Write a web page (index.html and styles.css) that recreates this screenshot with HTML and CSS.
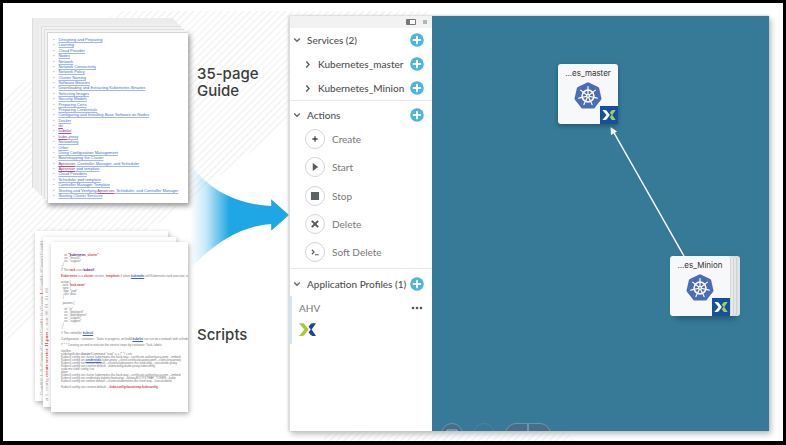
FILE: index.html
```html
<!DOCTYPE html>
<html lang="en">
<head>
<meta charset="utf-8">
<title>Guide and scripts to blueprint</title>
<link rel="stylesheet" href="styles.css">
</head>
<body>
<svg class="defs" aria-hidden="true">
  <symbol id="plus" viewBox="0 0 14 14"><circle cx="7" cy="7" r="6.800" fill="#4bb5e2"/><path d="M7 3.600v6.800M3.600 7h6.800" stroke="#fff" stroke-width="1.900" stroke-linecap="round"/></symbol>
  <symbol id="down" viewBox="0 0 8 8"><path d="M1.200 2.500 4 5.300l2.800-2.800" fill="none" stroke="#666" stroke-width="1.300"/></symbol>
  <symbol id="right" viewBox="0 0 8 8"><path d="M2.300 1.500 5 4.500 2.300 7.500" fill="none" stroke="#555" stroke-width="1.300"/></symbol>
  <symbol id="kube" viewBox="-15 -15 30 30">
    <path d="M0-12 9.400-7.500 11.700 2.700 5.200 10.800H-5.200L-11.700 2.700-9.400-7.500z" fill="#4a6db5" stroke="#4a6db5" stroke-width="3.500" stroke-linejoin="round"/>
    <circle r="5.900" fill="none" stroke="#fff" stroke-width="1.600"/>
    <path d="M0 0V-9.500M0 0 7.400-5.900M0 0 9.300 2.100M0 0 4.100 8.600M0 0-4.100 8.600M0 0-9.300 2.100M0 0-7.400-5.900" stroke="#fff" stroke-width="1.200" stroke-linecap="round"/>
    <circle r="1.900" fill="#fff"/><circle r=".8" fill="#4a6db5"/>
  </symbol>
  <symbol id="xleft" viewBox="0 0 16 12"><path d="M0 0h3.200Q4.600 0 5.500 1.200L9 6 5.500 10.800Q4.600 12 3.200 12H0L5 6z"/></symbol>
  <symbol id="xright" viewBox="0 0 16 12"><path d="M16 0h-3.200Q11.600 0 10.800 1L9 3.300 11.200 6 9 8.700 10.800 11Q11.600 12 12.800 12H16L11.900 6z"/></symbol>
</svg>

<main class="frame">
  <section class="sources">
    <div class="source">
      <div class="sheet guide">
        <ul>
          <li><a href="#">Designing and Preparing</a></li><li><a href="#">Learning</a></li><li><a href="#">Cloud Provider</a></li><li><a href="#">Nodes</a></li><li><a href="#">Network</a></li><li><a href="#">Network Connectivity</a></li><li><a href="#">Network Policy</a></li><li><a href="#">Cluster Naming</a></li><li><a href="#">Software Binaries</a></li><li><a href="#">Downloading and Extracting Kubernetes Binaries</a></li><li><a href="#">Selecting Images</a></li><li><a href="#">Security Models</a></li><li><a href="#">Preparing Certs</a></li><li><a href="#">Preparing Credentials</a></li><li><a href="#">Configuring and Installing Base Software on Nodes</a></li><li><a href="#">Docker</a></li><li><a href="#"><i>rkt</i></a></li><li><a href="#"><i>kubelet</i></a></li><li><a href="#"><i>kube</i>-proxy</a></li><li><a href="#">Networking</a></li><li><a href="#">Other</a></li><li><a href="#">Using Configuration Management</a></li><li><a href="#">Bootstrapping the Cluster</a></li><li><a href="#"><i>Apiserver</i>, Controller Manager, and Scheduler</a></li><li><a href="#"><i>Apiserver</i> pod template</a></li><li><a href="#">Cloud Providers</a></li><li><a href="#">Scheduler pod template</a></li><li><a href="#">Controller Manager Template</a></li><li><a href="#">Starting and Verifying <i>Apiserver</i>, Scheduler, and Controller Manager</a></li><li><a href="#">Starting Cluster Services</a></li>
        </ul>
      </div>
      <h2 class="label">35-page<br>Guide</h2>
    </div>
    <div class="source">
      <div class="stack">
        <div class="sheet back far"><p>Cont001 1. 0. (Create (Create) Cont01. 0. (Create <b>1.</b> Cont01. (Create) Cont01</p></div>
        <div class="sheet back near"><p>at 1. config <b>create service 11.pass</b> a. state 00. 01. 01. 00</p></div>
        <div class="sheet script"><pre>    id: <b class="m">"kubernetes_</b><b>cluster"</b>
    os: "linux01"
    os: "support"
  )
 }
// The <b>task</b> uses <b class="m">kubectl</b>

<b>Kubernetes</b> is a <b>cluster</b> service, <b>templates</b> if token <u>kubeadm</u> self.Kubernetes.task.executor, on jobs. It "deploy

action {
  task "<b>task.name</b>"
  type: (
   app: "pod"
   cpu: data
  )

  params {

    id: "in"
    os: "deployed"
    os: "deployment"
    os: "support"
    os: "support"
  )
 }

// The controller <u>kubectl</u>

Configuration : container : Tasks in progress, on build <u>kubelet</u> can run on a network with scheduler, on

/* * * Creating an end to execute the service steps by container: Task, labels

/opt/bin
sudo/opt/kube <strong>cluster</strong>/Command "start" = = /* */ = etc
Kubectl config set cluster kubernetes-the-hard-way --certificate-authority=ca.pem --embed
Kubectl config set <u>credentials</u> kube-proxy --client-certificate=proxy.pem --client-key=proxy
Kubectl config set context default --cluster=kubernetes-the-hard-way --user=kube-proxy
Kubectl config use context default --kubeconfig=kube-proxy.kubeconfig
sudo mv kube config /var
done
Kubectl config set cluster kubernetes-the-hard-way --certificate-authority=ca.pem --embed
Kubectl config set credentials kubelet bootstrap --token=BOOTSTRAP_TOKEN --kube
Kubectl config set context default --cluster=kubernetes-the-hard-way --user=kubelet

Kubectl config use context default -- <b>kubeconfig=bootstrap.kubeconfig</b></pre></div>
      </div>
      <h2 class="label low">Scripts</h2>
    </div>
    <svg class="arrow" viewBox="0 0 100 106" aria-hidden="true">
      <defs><linearGradient id="fade" x1="0" x2="1" y1="0" y2="0"><stop offset="0" stop-color="#1fa6e4" stop-opacity="0"/><stop offset=".16" stop-color="#1fa6e4" stop-opacity=".25"/><stop offset=".4" stop-color="#1fa6e4"/></linearGradient></defs>
      <path d="M0 0Q28 40 82 43V36L100 52 82 68V61Q40 64 0 106z" fill="url(#fade)"/>
    </svg>
  </section>

  <section class="app">
    <aside class="panel">
      <div class="bar">
        <svg width="10" height="6" aria-hidden="true"><path d="M.5.5h9v5h-9z" fill="#fff" stroke="#777"/><path d="M1 1h3v4H1z" fill="#777"/></svg>
        <svg width="6" height="6" aria-hidden="true"><path d="M1 1h4v4H1z" fill="#b5b5b5"/></svg>
      </div>
      <div class="group">
        <div class="row"><svg class="chev"><use href="#down"/></svg><h3>Services (2)</h3><button class="add" aria-label="Add service"><svg><use href="#plus"/></svg></button></div>
        <div class="row child"><svg class="chev"><use href="#right"/></svg><span>Kubernetes_master</span><button class="add" aria-label="Add to master"><svg><use href="#plus"/></svg></button></div>
        <div class="row child"><svg class="chev"><use href="#right"/></svg><span>Kubernetes_Minion</span><button class="add" aria-label="Add to minion"><svg><use href="#plus"/></svg></button></div>
      </div>
      <div class="group actions">
        <div class="row"><svg class="chev"><use href="#down"/></svg><h3>Actions</h3><button class="add" aria-label="Add action"><svg><use href="#plus"/></svg></button></div>
        <div class="list">
          <button><svg viewBox="0 0 20 20"><path d="M10 7v6M7 10h6" stroke="#555" stroke-width="1.500"/><circle cx="10" cy="10" r="1.500" fill="#555"/></svg>Create</button>
          <button><svg viewBox="0 0 20 20"><path d="M7.500 5.500v9l6-4.500z" fill="#555b5e"/></svg>Start</button>
          <button><svg viewBox="0 0 20 20"><path d="M5.500 5.500h9v9h-9z" fill="#5d6365"/></svg>Stop</button>
          <button><svg viewBox="0 0 20 20"><path d="m6.500 6.500 7 7m0-7-7 7" stroke="#555" stroke-width="2.200"/></svg>Delete</button>
          <button><svg viewBox="0 0 20 20"><path d="M6.500 7.500 9 10l-2.500 2.500M10 13h4" fill="none" stroke="#555" stroke-width="1.200"/></svg>Soft Delete</button>
        </div>
      </div>
      <div class="group last">
        <div class="row"><svg class="chev"><use href="#down"/></svg><h3>Application Profiles (1)</h3><button class="add" aria-label="Add profile"><svg><use href="#plus"/></svg></button></div>
        <div class="profile">
          <div class="name"><span>AHV</span><button aria-label="More"><svg width="12" height="4"><circle cx="2" cy="2" r="1.300"/><circle cx="6" cy="2" r="1.300"/><circle cx="10" cy="2" r="1.300"/></svg></button></div>
          <svg width="17" height="13" aria-label="Nutanix"><use href="#xleft" fill="#a9c83c"/><use href="#xright" fill="#17479a"/></svg>
        </div>
      </div>
    </aside>
    <div class="canvas">
      <svg class="edge" aria-hidden="true"><path d="M252 240 181 115" stroke="#fff" stroke-width="1.500"/><path d="m178.500 111 .5 8 6-3.500z" fill="#fff"/></svg>
      <div class="node master"><span>...es_master</span><svg class="kube"><use href="#kube"/></svg><div class="badge"><svg width="14" height="10"><use href="#xleft" fill="#fff"/><use href="#xright" fill="#a9d05a"/></svg></div></div>
      <div class="node minion"><span>...es_Minion</span><svg class="kube"><use href="#kube"/></svg><div class="badge"><svg width="14" height="10"><use href="#xleft" fill="#fff"/><use href="#xright" fill="#a9d05a"/></svg></div></div>
      <div class="tools">
        <button aria-label="Fit"><svg width="20" height="9"><path d="M5 9V6h10v3" fill="none" stroke="#9cbccb"/></svg></button>
        <button class="clear" aria-label="Arrange"><svg width="20" height="9"><path d="m5 9 2-2 2 2m2-2 2 2 2-2" fill="none" stroke="#7fa9bd"/></svg></button>
        <div class="pill"><button aria-label="Zoom out"></button><button aria-label="Zoom in"></button></div>
      </div>
    </div>
  </section>
</main>
</body>
</html>
```
FILE: styles.css
```css
* { box-sizing: border-box; }
body { margin: 0; font-family: Lato, "Liberation Sans", sans-serif; color: #555; }
h2, h3, p, pre, ul { margin: 0; padding: 0; }
button { border: 0; padding: 0; background: none; font: inherit; color: inherit; display: flex; align-items: center; }
.defs { position: absolute; width: 0; height: 0; }

.frame {
  position: relative;
  min-height: 100vh;
  border: 3px solid #000;
  border-bottom-width: 4px;
  background: #fff;
  display: grid;
  grid-template-columns: 286fr 480fr;
  padding-right: 14px;
  overflow: hidden;
}
.frame::before, .frame::after {
  content: "";
  position: absolute;
  inset: 0;
  background: repeating-linear-gradient(135deg, #f4f4f4 0 1px, #fff 2px 5px);
}
.frame::before { clip-path: polygon(0 95px, 115px 8px, 430px 8px, 0 340px); }
.frame::after { clip-path: polygon(320px 100%, 340px 400px, 550px 400px, 570px 100%); }

.sources { position: relative; z-index: 1; padding: 30px 0 0 45px; display: flex; flex-direction: column; gap: 39px; }
.source { display: flex; align-items: flex-start; gap: 9px; }
.label { font: 500 15px/17px Inter, sans-serif; color: #3c3c3c; padding-top: 32px; }
.label.low { padding-top: 84px; }
.sheet { width: 140px; height: 170px; background: #fff; }
.guide {
  padding: 5px 0 5px 5px;
  box-shadow: -1px -1px #d5d5d5, -3px -3px #f4f4f4, -4px -4px #dcdcdc, -6px -6px #f2f2f2, -7px -7px #dedede, -8px -8px #efefef, -9px -9px #efefef, -10px -10px #ececec, -11px -11px #ececec, -12px -12px #ececec, -13px -13px #ececec, -14px -14px #ececec, -15px -15px #ececec, -16px -15px #ddd, 1px 2px 5px 1px #999;
}
.guide ul { height: 100%; list-style: none; display: flex; flex-direction: column; justify-content: space-between; }
.guide li { display: flex; gap: 4px; font: 700 4px/4px "Liberation Sans", sans-serif; white-space: nowrap; color: #89a5ea; }
.guide li::before { content: "•"; }
.guide a { color: #4470dc; font-weight: 400; text-decoration: underline; text-decoration-color: #a2b7f0; }
.guide i { font-style: normal; color: #75469d; text-decoration: underline; text-decoration-color: #cf4b72; }

.stack { display: grid; width: 140px; }
.stack .sheet { grid-area: 1 / 1; width: auto; box-shadow: 1px 2px 5px #aaa; }
.stack .back { position: relative; overflow: hidden; }
.stack .far { left: -13px; top: -11px; margin-right: 7px; }
.stack .near { left: -5px; top: -5px; margin-right: 7px; }
.back p { writing-mode: vertical-rl; transform: rotate(180deg); height: 160px; font: 5px/6px "Liberation Serif", serif; color: #999; white-space: nowrap; margin: 4px 0 0 4px; }
.back.near p { margin-left: 1px; }
.stack .script { margin-left: 3px; padding: 12px 0 0 10px; overflow: hidden; position: relative; }
.script pre { font: 3px/3px "Liberation Sans", sans-serif; color: #777; }
.stack b { color: #d0454f; }
.stack b.m { color: #5d2274; }
.stack u { color: #3f63d6; font-weight: 700; }

.arrow { position: absolute; left: 187px; top: 160px; width: 99px; height: 106px; }

.app {
  position: relative;
  z-index: 1;
  display: grid;
  grid-template-columns: 143px 1fr;
  margin: 13px 0 10px;
  min-height: 415px;
  box-shadow: 2px 3px 6px #bbb, 0 0 2px #bbb;
  background: #fff;
}
.panel { display: flex; flex-direction: column; font-size: 10px; line-height: 12px; border-left: 1px solid #ddd; }
.bar { height: 12px; background: #f2f2f2; display: flex; align-items: center; justify-content: flex-end; gap: 6px; padding-right: 4px; }
.group { border-bottom: 1px solid #e9e9e9; }
.last { border: 0; }
.row { height: 24px; display: flex; align-items: center; padding: 0 8px 0 3px; gap: 6px; }
.row h3, .row span { font-size: 10px; font-weight: 500; color: #505050; flex: 1; min-width: 0; white-space: nowrap; }
.row.child { padding-left: 14px; }
.chev { width: 8px; height: 8px; flex: none; }
.add svg { width: 14px; height: 14px; }
.actions { padding: 2px 0 6px; height: 168px; display: flex; flex-direction: column; }
.list { flex: 1; padding: 2px 0 0 15px; display: flex; flex-direction: column; justify-content: space-between; color: #777; }
.list button { gap: 7px; }
.list svg { width: 20px; height: 20px; border: 1px solid #d5d5d5; border-radius: 50%; }
.last { padding-top: 3px; }
.profile { border-left: 2px solid #cce8f3; height: 48px; padding: 6px 9px 0 7px; color: #777; }
.name { display: flex; justify-content: space-between; margin-bottom: 9px; }
.name svg { fill: #555; }

.canvas { position: relative; background: #377a98; overflow: hidden; }
.edge { position: absolute; inset: 0; width: 100%; height: 100%; }
.node {
  position: absolute;
  width: 60px;
  height: 60px;
  border-radius: 3px;
  background: #f7f8fa;
  box-shadow: 0 2px 5px #235871;
  display: flex;
  flex-direction: column;
  align-items: center;
  padding-top: 3px;
  font: 8px/12px Inter, sans-serif;
  color: #333;
}
.master { left: 126px; top: 48px; }
.minion { left: 238px; top: 240px; box-shadow: 1px 0 #d3d6d8, 3px 0 #e9eaeb, 4px 0 #d0d3d5, 6px 0 #e4e6e7, 7px 0 #ccd0d2, 10px 0 #dfe2e3, 6px 3px 6px #235871; }
.kube { width: 30px; height: 30px; margin-top: 2px; }
.badge { position: absolute; right: 0; bottom: 0; width: 18px; height: 18px; background: #17509a; display: grid; place-items: center; }
.tools { position: absolute; left: 9px; bottom: 0; height: 8px; display: flex; gap: 10px; align-items: flex-start; }
.tools button { width: 22px; height: 22px; border: 1px solid #6796ad; border-radius: 50%; background: #456f89; align-items: flex-start; }
.tools .clear { background: none; border-color: #46859f; }
.pill { display: flex; }
.pill button { width: 23px; border-radius: 11px 0 0 0; }
.pill button + button { border-radius: 0 11px 0 0; }
```
